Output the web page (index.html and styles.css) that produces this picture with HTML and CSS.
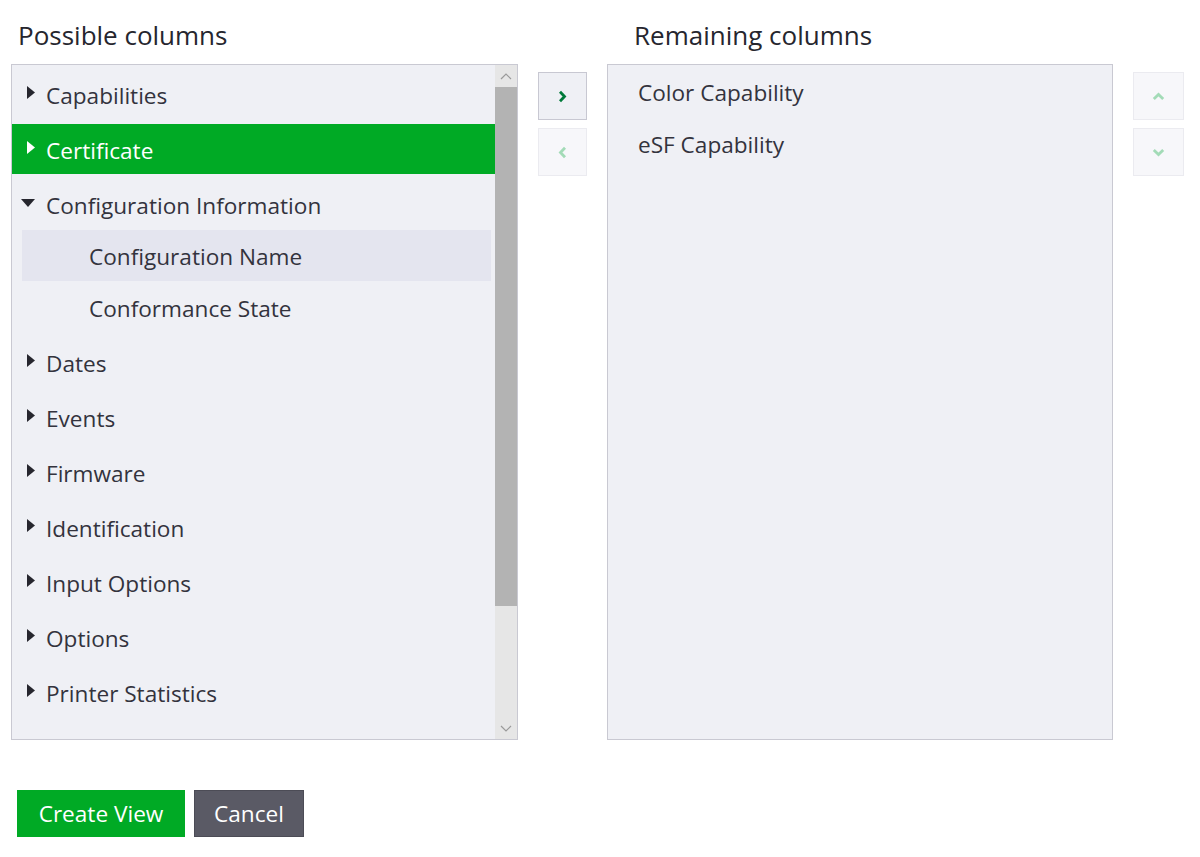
FILE: index.html
```html
<!DOCTYPE html>
<html>
<head>
<meta charset="utf-8">
<link rel="stylesheet" href="styles.css">
</head>
<body>
<div class="editor">
  <h2 class="title title-left">Possible columns</h2>
  <div class="spacer"></div>
  <h2 class="title title-right">Remaining columns</h2>
  <div class="spacer"></div>

  <div class="panel panel-left">
    <div class="tree">
      <div class="item">
        <div class="row"><svg class="caret" viewBox="0 0 8 13"><path d="M0 0 L8 6.5 L0 13 Z"/></svg><span>Capabilities</span></div>
      </div>
      <div class="item">
        <div class="row selected"><svg class="caret" viewBox="0 0 8 13"><path d="M0 0 L8 6.5 L0 13 Z"/></svg><span>Certificate</span></div>
      </div>
      <div class="item expanded">
        <div class="row"><svg class="caret caret-down" viewBox="0 0 14 8"><path d="M0 0 L14 0 L7 8 Z"/></svg><span>Configuration Information</span></div>
        <div class="children">
          <div class="sub hover">Configuration Name</div>
          <div class="sub">Conformance State</div>
        </div>
      </div>
      <div class="item">
        <div class="row"><svg class="caret" viewBox="0 0 8 13"><path d="M0 0 L8 6.5 L0 13 Z"/></svg><span>Dates</span></div>
      </div>
      <div class="item">
        <div class="row"><svg class="caret" viewBox="0 0 8 13"><path d="M0 0 L8 6.5 L0 13 Z"/></svg><span>Events</span></div>
      </div>
      <div class="item">
        <div class="row"><svg class="caret" viewBox="0 0 8 13"><path d="M0 0 L8 6.5 L0 13 Z"/></svg><span>Firmware</span></div>
      </div>
      <div class="item">
        <div class="row"><svg class="caret" viewBox="0 0 8 13"><path d="M0 0 L8 6.5 L0 13 Z"/></svg><span>Identification</span></div>
      </div>
      <div class="item">
        <div class="row"><svg class="caret" viewBox="0 0 8 13"><path d="M0 0 L8 6.5 L0 13 Z"/></svg><span>Input Options</span></div>
      </div>
      <div class="item">
        <div class="row"><svg class="caret" viewBox="0 0 8 13"><path d="M0 0 L8 6.5 L0 13 Z"/></svg><span>Options</span></div>
      </div>
      <div class="item">
        <div class="row"><svg class="caret" viewBox="0 0 8 13"><path d="M0 0 L8 6.5 L0 13 Z"/></svg><span>Printer Statistics</span></div>
      </div>
      <div class="item">
        <div class="row"><svg class="caret" viewBox="0 0 8 13"><path d="M0 0 L8 6.5 L0 13 Z"/></svg></div>
      </div>
    </div>
    <div class="scrollbar">
      <div class="sb-btn"><svg viewBox="0 0 12 7"><path d="M1 6 L6 1 L11 6"/></svg></div>
      <div class="sb-thumb"></div>
      <div class="sb-track"></div>
      <div class="sb-btn"><svg viewBox="0 0 12 7"><path d="M1 1 L6 6 L11 1"/></svg></div>
    </div>
  </div>

  <div class="btn-col">
    <button class="icon-btn"><svg viewBox="0 0 9 13"><path d="M2 1.8 L6.5 6.5 L2 11.2"/></svg></button>
    <button class="icon-btn disabled"><svg viewBox="0 0 9 13"><path d="M7 1.8 L2.5 6.5 L7 11.2"/></svg></button>
  </div>

  <div class="panel panel-right">
    <div class="list">
      <div class="entry">Color Capability</div>
      <div class="entry">eSF Capability</div>
    </div>
  </div>

  <div class="btn-col btn-col-v">
    <button class="icon-btn disabled"><svg viewBox="0 0 13 9"><path d="M1.8 7 L6.5 2.5 L11.2 7"/></svg></button>
    <button class="icon-btn disabled"><svg viewBox="0 0 13 9"><path d="M1.8 2 L6.5 6.5 L11.2 2"/></svg></button>
  </div>
</div>

<div class="actions">
  <button class="btn primary">Create View</button>
  <button class="btn secondary">Cancel</button>
</div>
</body>
</html>
```

FILE: styles.css
```css
* { box-sizing: border-box; }

body {
  margin: 0;
  background: #ffffff;
  font-family: "Open Sans", "Noto Sans", "Liberation Sans", sans-serif;
  color: #33333d;
}

.editor {
  display: grid;
  grid-template-columns: 507px 49px 506px 51px;
  grid-template-rows: 64px 676px;
  column-gap: 20px;
  margin-left: 11px;
}

.title {
  margin: 0;
  font-size: 26px;
  font-weight: 400;
  color: #26262e;
  line-height: 70px;
}
.title-left { padding-left: 7px; }
.title-right { padding-left: 27px; }

.panel {
  border: 1px solid #c9c9d2;
  background: #eff0f5;
  overflow: hidden;
}

.panel-left {
  display: flex;
}

.tree {
  flex: 1;
  padding-top: 4px;
  overflow: hidden;
  font-size: 22.6px;
}

.item { margin-bottom: 5px; }
.item.expanded { margin-bottom: 3px; }

.row {
  height: 50px;
  display: flex;
  align-items: center;
  padding-left: 15px;
  color: #33333d;
}
.row span { margin-left: 11px; padding-top: 2px; }
.row.selected {
  background: #00aa25;
  color: #ffffff;
}
.row.selected .caret { fill: #ffffff; }

.caret {
  width: 8px;
  height: 13px;
  fill: #26262e;
  margin-top: -3px;
}
.caret-down {
  width: 14px;
  height: 8px;
  margin-top: -3px;
  margin-left: -6px;
}
.row .caret-down + span { margin-left: 11px; }

.children { padding-top: 1px; }

.sub {
  height: 52px;
  display: flex;
  align-items: center;
  margin: 0 4px 0 10px;
  padding-left: 67px;
  padding-top: 1px;
}
.sub.hover { background: #e4e5ef; height: 51px; margin-bottom: 1px; padding-top: 2px; }

.scrollbar {
  width: 22px;
  display: flex;
  flex-direction: column;
  background: #e6e6e6;
}
.sb-btn {
  height: 22px;
  display: flex;
  align-items: center;
  justify-content: center;
}
.sb-btn svg {
  width: 12px;
  height: 7px;
  fill: none;
  stroke: #9a9a9a;
  stroke-width: 1.2;
}
.sb-thumb {
  height: 519px;
  background: #b3b3b3;
}
.sb-track { flex: 1; }

.btn-col {
  display: flex;
  flex-direction: column;
  gap: 8px;
  padding-top: 8px;
}

.icon-btn {
  width: 100%;
  height: 48px;
  border: 1px solid #c8c8d2;
  background: #eff0f5;
  display: flex;
  align-items: center;
  justify-content: center;
  padding: 0;
}
.icon-btn svg {
  width: 9px;
  height: 13px;
  fill: none;
  stroke: #007a3a;
  stroke-width: 2.8;
}
.icon-btn.disabled {
  border-color: #ebebf0;
  background: #f7f7fa;
}
.icon-btn.disabled svg { stroke: #a3dbb7; }
.btn-col-v .icon-btn svg { width: 13px; height: 9px; }

.list {
  padding-top: 1px;
  font-size: 22.6px;
}
.entry {
  height: 52px;
  display: flex;
  align-items: center;
  padding-left: 30px;
  color: #33333d;
}

.actions {
  display: flex;
  gap: 9px;
  margin: 50px 0 0 17px;
}
.btn {
  height: 47px;
  border: none;
  font-family: inherit;
  font-size: 22.6px;
  color: #ffffff;
  padding: 0;
}
.btn.primary {
  width: 168px;
  background: #00aa25;
}
.btn.secondary {
  width: 110px;
  background: #5a5a65;
  border: 1px solid #4c4c56;
}
```
